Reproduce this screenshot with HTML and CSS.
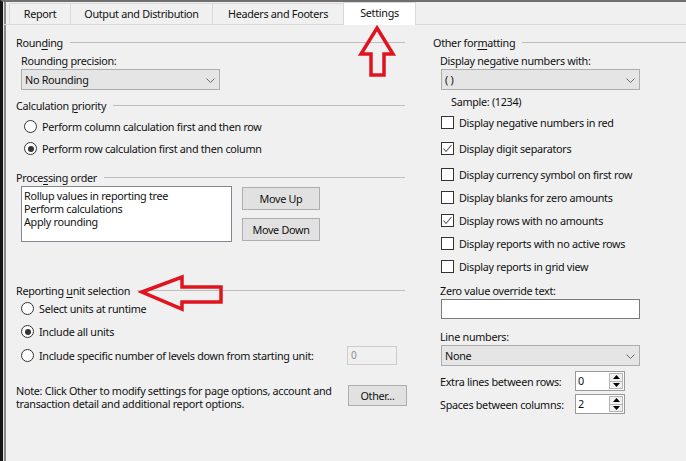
FILE: index.html
```html
<!DOCTYPE html>
<html>
<head>
<meta charset="utf-8">
<link rel="stylesheet" href="styles.css">
</head>
<body>
<div class="window">
  <div class="tabs">
    <div class="tab tab-report">Report</div>
    <div class="tab tab-output">Output and Distribution</div>
    <div class="tab tab-headers">Headers and Footers</div>
    <div class="tab tab-settings active">Settings</div>
  </div>
  <div class="panel">
    <section class="col col-left">
      <div class="group-title gt-rounding"><span>Roun<u>d</u>ing</span></div>
      <div class="field-label fl-precision">Rounding precision:</div>
      <div class="select sel-rounding"><span>No Rounding</span><svg class="chev" width="9" height="5" viewBox="0 0 9 5"><polyline points="0.5,0.5 4.5,4.5 8.5,0.5" fill="none" stroke="#6a6a6a" stroke-width="1"/></svg></div>

      <div class="group-title gt-calc"><span>Calculation <u>p</u>riority</span></div>
      <div class="radio calc calc-first"><span class="radio-circle"></span><span>Perform column calculation first and then row</span></div>
      <div class="radio calc calc-second"><span class="radio-circle checked"></span><span>Perform row calculation first and then column</span></div>

      <div class="group-title gt-proc"><span>Proce<u>s</u>sing order</span></div>
      <div class="order-row">
        <div class="listbox">
          <div>Rollup values in reporting tree</div>
          <div>Perform calculations</div>
          <div>Apply rounding</div>
        </div>
        <div class="order-buttons">
          <div class="btn btn-order">Move Up</div>
          <div class="btn btn-order">Move Down</div>
        </div>
      </div>

      <div class="group-title gt-unit"><span>Reporting <u>u</u>nit selection</span></div>
      <div class="radio unit unit-runtime"><span class="radio-circle"></span><span>Select units at runtime</span></div>
      <div class="radio unit unit-all"><span class="radio-circle checked"></span><span>Include all units</span></div>
      <div class="radio unit unit-levels"><span class="radio-circle"></span><span>Include specific number of levels down from starting unit:</span><div class="disabled-input">0</div></div>

      <div class="note-row">
        <p class="note">Note: Click Other to modify settings for page options, account and transaction detail and additional report options.</p>
        <div class="btn btn-other">Other...</div>
      </div>
    </section>

    <section class="col col-right">
      <div class="group-title gt-other"><span>Other for<u>m</u>atting</span></div>
      <div class="field-label fl-negative">Display negative numbers with:</div>
      <div class="select sel-negative"><span>( )</span><svg class="chev" width="9" height="5" viewBox="0 0 9 5"><polyline points="0.5,0.5 4.5,4.5 8.5,0.5" fill="none" stroke="#6a6a6a" stroke-width="1"/></svg></div>
      <div class="sample">Sample: (1234)</div>

      <div class="check ck-first"><span class="check-box"></span><span>Display negative numbers in red</span></div>
      <div class="check ck-wide"><span class="check-box checked"><svg width="11" height="11" viewBox="0 0 11 11"><polyline points="1.5,5.5 4,8.5 9.5,2" fill="none" stroke="#555" stroke-width="1.1"/></svg></span><span>Display digit separators</span></div>
      <div class="check ck-wide"><span class="check-box"></span><span>Display currency symbol on first row</span></div>
      <div class="check"><span class="check-box"></span><span>Display blanks for zero amounts</span></div>
      <div class="check"><span class="check-box checked"><svg width="11" height="11" viewBox="0 0 11 11"><polyline points="1.5,5.5 4,8.5 9.5,2" fill="none" stroke="#555" stroke-width="1.1"/></svg></span><span>Display rows with no amounts</span></div>
      <div class="check"><span class="check-box"></span><span>Display reports with no active rows</span></div>
      <div class="check"><span class="check-box"></span><span>Display reports in grid view</span></div>

      <div class="field-label fl-zero">Zero value override text:</div>
      <div class="text-input"></div>

      <div class="field-label fl-lines">Line numbers:</div>
      <div class="select sel-lines"><span>None</span><svg class="chev" width="9" height="5" viewBox="0 0 9 5"><polyline points="0.5,0.5 4.5,4.5 8.5,0.5" fill="none" stroke="#6a6a6a" stroke-width="1"/></svg></div>

      <div class="spin-row spin-extra">
        <span class="spin-label">Extra lines between rows:</span>
        <div class="spinner"><span class="spin-value">0</span><span class="spin-buttons"><span class="spin-btn"><svg width="7" height="4" viewBox="0 0 7 4"><polygon points="0,4 3.5,0 7,4" fill="#000"/></svg></span><span class="spin-btn"><svg width="7" height="4" viewBox="0 0 7 4"><polygon points="0,0 3.5,4 7,0" fill="#000"/></svg></span></span></div>
      </div>
      <div class="spin-row spin-spaces">
        <span class="spin-label">Spaces between columns:</span>
        <div class="spinner"><span class="spin-value">2</span><span class="spin-buttons"><span class="spin-btn"><svg width="7" height="4" viewBox="0 0 7 4"><polygon points="0,4 3.5,0 7,4" fill="#000"/></svg></span><span class="spin-btn"><svg width="7" height="4" viewBox="0 0 7 4"><polygon points="0,0 3.5,4 7,0" fill="#000"/></svg></span></span></div>
      </div>
    </section>
  </div>

  <svg class="annotations" width="686" height="461" viewBox="0 0 686 461">
    <polygon points="377,28 393,54 384,54 384,75 371,75 371,54 361,54" fill="none" stroke="#e0141f" stroke-width="3.5" stroke-linejoin="miter"/>
    <polygon points="142,292 182,277 182,287 221,287 221,302 182,302 182,309" fill="none" stroke="#e0141f" stroke-width="3.5" stroke-linejoin="miter"/>
  </svg>
</div>
</body>
</html>
```

FILE: styles.css
```css
* { box-sizing: border-box; }
html, body { margin: 0; padding: 0; }
body {
  width: 686px;
  height: 461px;
  overflow: hidden;
  background: #f0f0f0;
  font-family: "Noto Sans", "Open Sans", sans-serif;
  font-size: 10.8px;
  letter-spacing: -0.3px;
  color: #111;
}
u { text-decoration: underline; text-underline-offset: 2px; }

.window {
  position: relative;
  width: 686px;
  height: 461px;
  border-left: 3px solid #161616;
  border-top: 2px solid #6f6f6f;
  box-shadow: inset 1px 0 #e4e4e4, inset 3px 0 #8a8a8a;
}

/* Tabs */
.tabs {
  display: flex;
  align-items: flex-end;
  height: 23px;
  padding-left: 6px;
  border-bottom: 1px solid #d9d9d9;
}
.tab {
  height: 21px;
  line-height: 20px;
  text-align: center;
  border: 1px solid #d9d9d9;
  border-bottom: 0;
  margin-left: -1px;
  background: #f0f0f0;
  white-space: nowrap;
}
.tab-report { width: 62px; margin-left: 0; }
.tab-output { width: 143px; }
.tab-headers { width: 132px; }
.tab-settings { width: 73px; }
.tab.active {
  height: 23px;
  margin-bottom: -1px;
  background: #fff;
  line-height: 20px;
  position: relative;
}

/* Panel */
.panel {
  display: flex;
  padding-left: 13px;
}
.col-left { width: 389px; }
.col-right { margin-left: 28px; flex: 1; }

.group-title {
  display: flex;
  align-items: center;
  height: 15px;
  line-height: 15px;
  white-space: nowrap;
}
.group-title::after {
  content: "";
  flex: 1;
  border-top: 1px solid #bdbdbd;
  margin-left: 7px;
}
.gt-rounding, .gt-other { margin-top: 10px; }
.gt-calc { margin-top: 8px; }
.gt-proc { margin-top: 14px; }
.gt-unit { margin-top: 41px; }

.field-label {
  height: 15px;
  line-height: 15px;
  white-space: nowrap;
}
.fl-precision { margin: 3px 0 0 5px; }
.fl-negative { margin: 3px 0 0 7px; }
.fl-zero { margin: 9px 0 0 7px; }
.fl-lines { margin: 10px 0 0 7px; }

.select {
  display: flex;
  align-items: center;
  justify-content: space-between;
  width: 199px;
  height: 21px;
  margin-top: 1px;
  padding: 0 4px 0 3px;
  background: #e5e5e5;
  border: 1px solid #adadad;
}
.sel-rounding { margin-left: 5px; }
.sel-negative, .sel-lines { margin-left: 8px; }
.chev { display: block; margin-top: 1px; }

/* Radios */
.radio {
  display: flex;
  align-items: center;
  height: 15px;
  line-height: 15px;
  white-space: nowrap;
}
.radio-circle {
  width: 13px;
  height: 13px;
  border: 1px solid #333;
  border-radius: 50%;
  background: #fff;
  margin-right: 5px;
  flex: none;
  position: relative;
}
.radio-circle.checked::after {
  content: "";
  position: absolute;
  left: 2.5px;
  top: 2.5px;
  width: 6px;
  height: 6px;
  border-radius: 50%;
  background: #333;
}
.calc { padding-left: 8px; }
.calc-first { margin-top: 6px; }
.calc-second { margin-top: 7px; }
.unit { padding-left: 5px; }
.unit-runtime { margin-top: 3px; }
.unit-all { margin-top: 8px; }
.unit-levels { margin-top: 9px; width: 381px; }

.disabled-input {
  margin-left: auto;
  width: 50px;
  height: 19px;
  line-height: 17px;
  padding-left: 3px;
  border: 1px solid #cccccc;
  background: #f0f0f0;
  color: #8d8d8d;
  font-size: 10px;
}

/* Processing order */
.order-row {
  display: flex;
  align-items: flex-start;
  margin-top: 1px;
}
.listbox {
  margin-left: 5px;
  width: 211px;
  height: 56px;
  padding: 2px 2px 0 2px;
  background: #fff;
  border: 1px solid #828790;
  line-height: 13px;
}
.order-buttons {
  display: flex;
  flex-direction: column;
  gap: 8px;
  margin: 1px 0 0 10px;
}
.btn {
  display: flex;
  align-items: center;
  justify-content: center;
  background: #e1e1e1;
  border: 1px solid #adadad;
  white-space: nowrap;
}
.btn-order { width: 78px; height: 23px; }

/* Note */
.note-row {
  display: flex;
  justify-content: space-between;
  align-items: flex-start;
  width: 391px;
  margin-top: 21px;
}
.note {
  margin: 0;
  width: 325px;
  line-height: 13px;
}
.btn-other { width: 59px; height: 21px; margin-top: 1px; }

/* Right column */
.sample {
  margin: 4px 0 0 18px;
  height: 15px;
  line-height: 15px;
}
.check {
  display: flex;
  align-items: center;
  height: 15px;
  line-height: 15px;
  margin: 8px 0 0 8px;
  white-space: nowrap;
}
.ck-first { margin-top: 6px; }
.ck-wide { margin-top: 11px; }
.check-box {
  width: 13px;
  height: 13px;
  border: 1px solid #333;
  background: #fff;
  margin-right: 5px;
  flex: none;
  display: flex;
  align-items: center;
  justify-content: center;
}
.check-box svg { display: block; }

.text-input {
  margin: 1px 0 0 8px;
  width: 199px;
  height: 20px;
  background: #fff;
  border: 1px solid #7a7a7a;
}

.spin-row {
  display: grid;
  grid-template-columns: 135px 50px;
  align-items: center;
  margin-left: 7px;
}
.spin-extra { margin-top: 5px; }
.spin-spaces { margin-top: 3px; }
.spin-label { white-space: nowrap; }
.spinner {
  display: flex;
  height: 20px;
  background: #fff;
  border: 1px solid #9a9a9a;
}
.spin-value {
  flex: 1;
  padding-left: 2px;
  line-height: 18px;
}
.spin-buttons {
  display: flex;
  flex-direction: column;
  width: 14px;
  margin: 1px 1px 1px 0;
}
.spin-btn {
  flex: 1;
  display: flex;
  align-items: center;
  justify-content: center;
  background: #f0f0f0;
  border: 1px solid #b5b5b5;
}
.spin-btn + .spin-btn { border-top: 0; }
.spin-btn svg { display: block; }

.annotations {
  position: absolute;
  left: -3px;
  top: -2px;
  pointer-events: none;
}
```
